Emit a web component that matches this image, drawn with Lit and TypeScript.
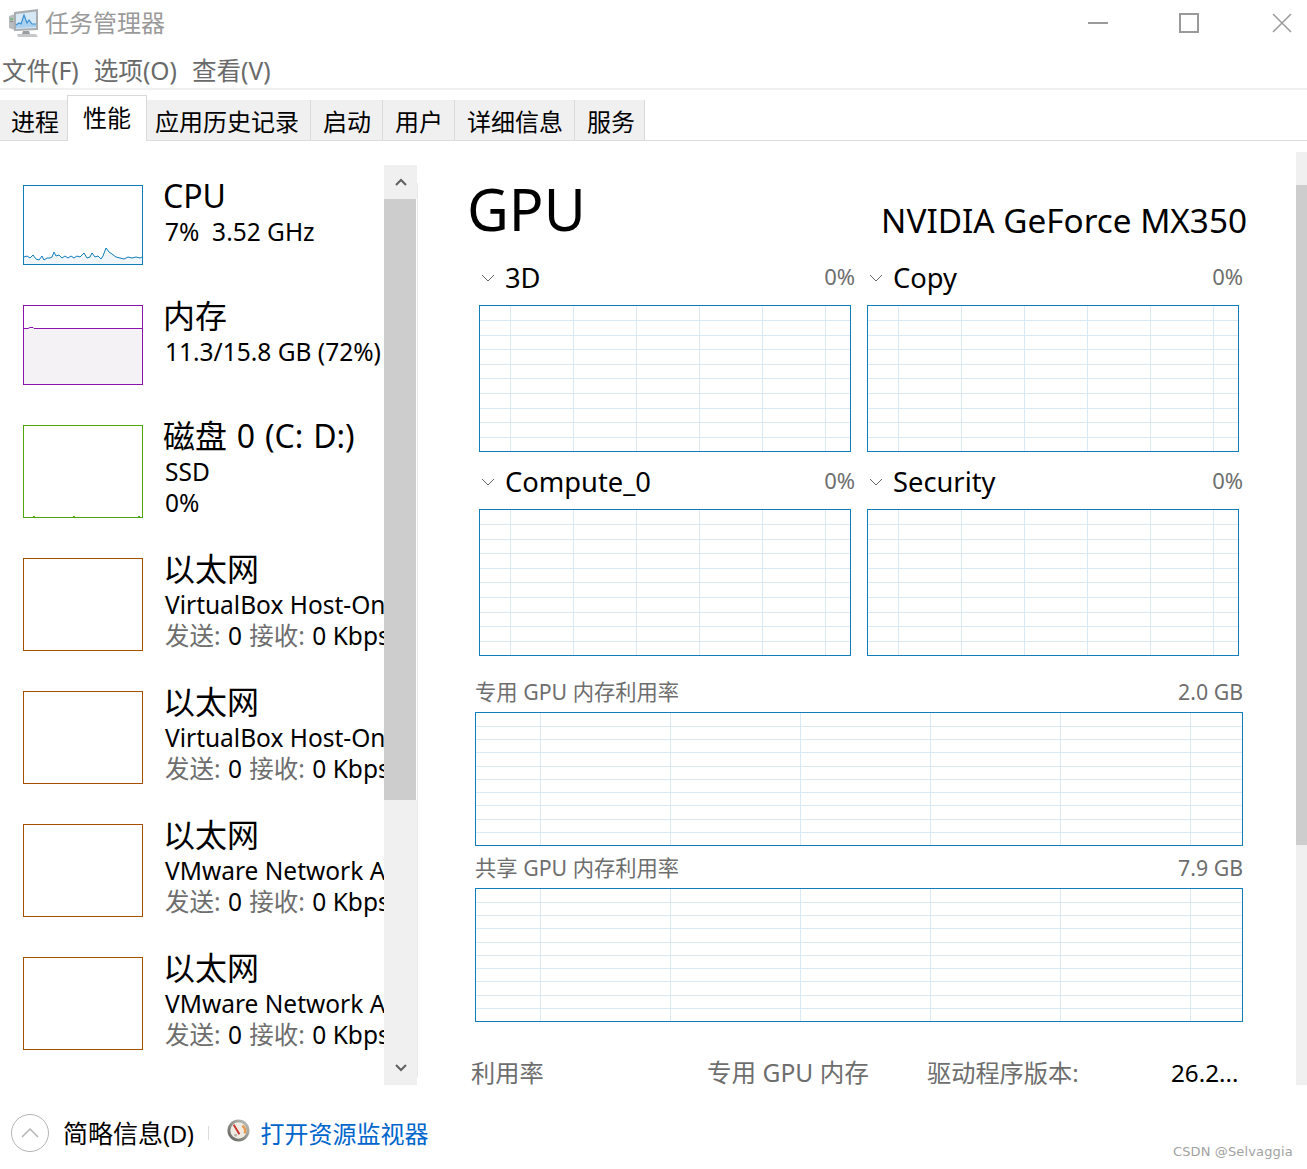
import { LitElement, html, css, svg } from "lit";
import { customElement } from "lit/decorators.js";

function grid(w: number, h: number, xs: number[], ys: number[]) {
  return html`<svg class="grid" width=${w} height=${h} viewBox="0 0 ${w} ${h}" shape-rendering="crispEdges">
    ${xs.map((x) => svg`<line x1=${x + 0.5} x2=${x + 0.5} y1="0" y2=${h} stroke="#dbe9f4"></line>`)}
    ${ys.map((y) => svg`<line x1="0" x2=${w} y1=${y + 0.5} y2=${y + 0.5} stroke="#dbe9f4"></line>`)}
  </svg>`;
}

const cpuLine =
  "0,71 3,70 6,72 9,69 12,73 15,74 18,70 20,74 23,72 26,72 28,71 30,66 32,70 35,69 38,72 41,70 44,72 47,70 50,72 53,70 56,71 60,67 63,72 66,71 68,67 71,71 74,70 77,73 79,70 82,62 85,66 88,68 92,71 96,72 100,73 104,71 108,72 112,71 116,72 118,71";

const sideRows = [
  { l1: "VirtualBox Host-Only Network" },
  { l1: "VirtualBox Host-Only Network #2" },
  { l1: "VMware Network Adapter VMnet1" },
  { l1: "VMware Network Adapter VMnet8" },
];

@customElement("app-root")
export class AppRoot extends LitElement {
  static styles = css`
    :host {
      display: block;
      width: 1307px;
      height: 1169px;
      overflow: hidden;
      background: #fff;
      color: #000;
      font-family: "Noto Sans", "Noto Sans CJK SC", sans-serif;
    }
    .app { display: flex; flex-direction: column; height: 1169px; position: relative; }
    .title { height: 46px; display: flex; align-items: center; flex: none; }
    .app-icon { margin-left: 9px; width: 30px; height: 29px; flex: none; display: block; }
    .title-text { font-size: 24px; color: #9a9a9a; margin-left: 6px; line-height: 46px; flex: 1; }
    .win { display: flex; align-items: center; flex: none; }
    .win svg { display: block; }
    .menu { height: 44px; box-sizing: border-box; display: flex; align-items: center; gap: 15px; padding: 4px 0 0 2px; font-size: 24.6px; color: #6a6a6a; border-bottom: 2px solid #f0f0f0; flex: none; }
    .tabs { height: 51px; display: flex; align-items: flex-end; border-bottom: 1px solid #dcdcdc; flex: none; box-sizing: border-box; }
    .tab { height: 40px; box-sizing: border-box; padding: 0 11px 0 12px; background: #f0f0f0; border-right: 1px solid #d9d9d9; font-size: 24px; line-height: 43px; white-space: nowrap; }
    .tab:first-child { padding-left: 11px; }
    .tab:last-child { padding-right: 9px; }
    .tab.active { height: 46px; background: #fff; border: 1px solid #d9d9d9; border-bottom: none; margin: 0 -4px -1px -4px; padding: 0 15px; line-height: 43px; position: relative; z-index: 1; }
    .body { height: 944px; display: flex; flex: none; overflow: hidden; }
    .side { width: 384px; flex: none; overflow: hidden; padding: 44px 0 0 23px; box-sizing: border-box; display: flex; flex-direction: column; gap: 40px; }
    .row { display: flex; align-items: flex-start; flex: none; }
    .thumb { width: 120px; box-sizing: border-box; border: 1px solid; flex: none; display: block; overflow: hidden; }
    .thumb svg { display: block; }
    .h80 { height: 80px; }
    .h93 { height: 93px; }
    .cpu { border-color: #117dbb; }
    .mem { border-color: #8b12ae; }
    .disk { border-color: #4da60c; }
    .eth { border-color: #a74f00; }
    .rowtext { margin: -8px 0 0 21px; white-space: nowrap; }
    .rt { font-size: 32px; line-height: 38px; height: 39px; margin-left: -1px; word-spacing: 1.5px; }
    .rs { font-size: 24.5px; line-height: 31px; height: 31px; margin-left: 1px; }
    .wide { word-spacing: 1px; }
    .grey { color: #6e6e6e; }
    .sb { width: 33px; flex: none; margin-top: 24px; height: 920px; display: flex; flex-direction: column; background: #f0f0f0; }
    .sb-btn { height: 34px; display: flex; align-items: center; justify-content: center; flex: none; }
    .sb-thumb { height: 601px; background: #cdcdcd; border-right: 1px solid #fff; flex: none; }
    .sb-rest { flex: 1; }
    .sb-line { width: 1px; flex: none; margin-top: 42px; height: 894px; background: #e8e8e8; }
    .main { width: 878px; flex: none; padding: 0 0 0 57px; box-sizing: border-box; overflow: hidden; }
    .inner { width: 768px; }
    .head { display: flex; justify-content: space-between; align-items: flex-start; height: 122px; margin: 0 -4px 0 -8px; }
    .gpu { font-size: 57.5px; line-height: 70px; margin-top: 33px; }
    .model { font-size: 33.3px; line-height: 44px; margin-top: 57px; white-space: nowrap; }
    .cells { display: grid; grid-template-columns: 380px 380px; column-gap: 8px; row-gap: 15px; }
    .cell-head { height: 42px; display: flex; align-items: center; padding-bottom: 13px; box-sizing: border-box; }
    .chev { margin: 0 10px 0 6px; flex: none; display: block; }
    .cell-name { font-size: 27.3px; flex: 1; line-height: 36px; }
    .pct { font-size: 22px; color: #6e6e6e; line-height: 30px; margin-bottom: 4px; }
    .chart { border: 1px solid #117dbb; box-sizing: border-box; display: block; background: #fff; }
    .grid { display: block; }
    .small { width: 372px; height: 147px; margin-left: 4px; }
    .mem-chart { width: 768px; height: 134px; }
    .mem-wrap { padding-top: 14px; }
    .mem-label { height: 42px; box-sizing: border-box; padding-top: 2px; display: flex; align-items: center; justify-content: space-between; font-size: 21.3px; color: #6e6e6e; line-height: 32px; white-space: nowrap; }
    .stats { display: flex; margin: 31px 0 0 -4px; font-size: 24.2px; line-height: 40px; color: #6e6e6e; white-space: nowrap; }
    .s1 { width: 236px; }
    .s2 { width: 220px; font-size: 24.6px; }
    .s3 { width: 244px; }
    .s4 { color: #000; }
    .msb { width: 11px; flex: none; margin-top: 11px; background: #f0f0f0; display: flex; flex-direction: column; }
    .msb-top { height: 33px; flex: none; }
    .msb-thumb { height: 660px; background: #cdcdcd; flex: none; }
    .foot { flex: 1; display: flex; align-items: center; padding: 12px 0 0 11px; box-sizing: border-box; height: 84px; }
    .circle { width: 38px; height: 38px; flex: none; display: block; }
    .brief { font-size: 25px; line-height: 38px; margin: 1px 0 0 14px; white-space: nowrap; }
    .brief span { font-size: 24px; letter-spacing: -0.5px; }
    .vr { width: 1px; height: 14px; background: #dcdcdc; margin: 0 18px 0 15px; flex: none; }
    .gauge { width: 23px; height: 23px; flex: none; display: block; margin-top: -5px; }
    .link { font-size: 24px; line-height: 38px; color: #0066cc; margin: 1px 0 0 10px; white-space: nowrap; }
    .mark { position: absolute; left: 1173px; top: 1143px; font-family: "DejaVu Sans", sans-serif; font-size: 13px; letter-spacing: 0.13px; line-height: 18px; color: #a2a2a2; white-space: nowrap; }
  `;

  private smallChart() {
    return html`<div class="chart small">
      ${grid(370, 145, [30, 93, 156, 219, 282, 345], [14, 29, 43, 58, 72, 87, 102, 116, 131])}
    </div>`;
  }

  private memChart() {
    return html`<div class="chart mem-chart">
      ${grid(766, 132, [64, 194, 324, 454, 584, 714], [13, 26, 39, 53, 66, 79, 92, 106, 119])}
    </div>`;
  }

  private cell(name: string) {
    return html`<div>
      <div class="cell-head">
        <svg class="chev" width="14" height="8" viewBox="0 0 14 8"><path d="M1 1l6 6 6-6" fill="none" stroke="#666" stroke-width="1"></path></svg>
        <div class="cell-name">${name}</div>
        <div class="pct">0%</div>
      </div>
      ${this.smallChart()}
    </div>`;
  }

  render() {
    return html`<div class="app">
      <div class="title">
        <svg class="app-icon" viewBox="0 0 30 29">
          <path d="M0 7l6-2v16l-6-2z" fill="#b9bcbe"></path>
          <rect x="1" y="9" width="3" height="2" fill="#7fb77f"></rect>
          <rect x="1" y="12" width="3" height="1" fill="#8a8a8a"></rect>
          <path d="M5 3l24-3v21l-24 1z" fill="#a9adb0"></path>
          <path d="M7 5l20-2.500v16.500l-20 1z" fill="#d6e8f5"></path>
          <path d="M7 16l3-2 2 1 3-9 3 8 2-3 3 4 3 0 1 0v3l-20 1z" fill="#a9d0ee"></path>
          <path d="M7 16l3-2 2 1 3-9 3 8 2-3 3 4 4 0" fill="none" stroke="#3b8fd0" stroke-width="1.2"></path>
          <path d="M14 22h6l1 3h-8z" fill="#9a9ea1"></path>
          <path d="M8 25h19l2 3H9z" fill="#c6c8ca"></path>
        </svg>
        <div class="title-text">任务管理器</div>
        <div class="win">
          <svg width="247" height="46" viewBox="0 0 247 46">
            <path d="M28 23h20" stroke="#9a9a9a" stroke-width="2"></path>
            <rect x="120" y="14" width="18" height="18" fill="none" stroke="#9a9a9a" stroke-width="2"></rect>
            <path d="M213 14l18 18M231 14l-18 18" stroke="#9a9a9a" stroke-width="1.5"></path>
          </svg>
        </div>
      </div>
      <div class="menu"><span>文件(F)</span><span>选项(O)</span><span>查看(V)</span></div>
      <div class="tabs">
        <div class="tab">进程</div>
        <div class="tab active">性能</div>
        <div class="tab">应用历史记录</div>
        <div class="tab">启动</div>
        <div class="tab">用户</div>
        <div class="tab">详细信息</div>
        <div class="tab">服务</div>
      </div>
      <div class="body">
        <div class="side">
          <div class="row">
            <div class="thumb h80 cpu">
              <svg width="118" height="78" viewBox="0 0 118 78">
                <polygon points="${cpuLine} 118,78 0,78" fill="#f1f6fa"></polygon>
                <polyline points=${cpuLine} fill="none" stroke="#117dbb" stroke-width="1"></polyline>
              </svg>
            </div>
            <div class="rowtext"><div class="rt">CPU</div><div class="rs">7%&nbsp;&nbsp;3.52 GHz</div></div>
          </div>
          <div class="row">
            <div class="thumb h80 mem">
              <svg width="118" height="78" viewBox="0 0 118 78">
                <rect x="0" y="23" width="118" height="55" fill="#f4f2f4"></rect>
                <path d="M0 22.500h4l2-1h3l1 1h108" fill="none" stroke="#8b12ae" stroke-width="1"></path>
              </svg>
            </div>
            <div class="rowtext"><div class="rt">内存</div><div class="rs">11.3/15.8 GB (72%)</div></div>
          </div>
          <div class="row">
            <div class="thumb h93 disk">
              <svg width="118" height="91" viewBox="0 0 118 91">
                <path d="M9 90.500h2M49 90.500h2M114 90.500h2" stroke="#4da60c" stroke-width="1"></path>
              </svg>
            </div>
            <div class="rowtext"><div class="rt">磁盘 0 (C: D:)</div><div class="rs">SSD</div><div class="rs">0%</div></div>
          </div>
          ${sideRows.map(
            (r) => html`<div class="row">
              <div class="thumb h93 eth"></div>
              <div class="rowtext">
                <div class="rt">以太网</div>
                <div class="rs">${r.l1}</div>
                <div class="rs"><span class="wide"><span class="grey">发送:</span> 0 <span class="grey">接收:</span> 0</span> Kbps</div>
              </div>
            </div>`
          )}
        </div>
        <div class="sb">
          <div class="sb-btn">
            <svg width="12" height="8" viewBox="0 0 12 8"><path d="M1 7l5-5 5 5" fill="none" stroke="#606060" stroke-width="2"></path></svg>
          </div>
          <div class="sb-thumb"></div>
          <div class="sb-rest"></div>
          <div class="sb-btn">
            <svg width="12" height="8" viewBox="0 0 12 8"><path d="M1 1l5 5 5-5" fill="none" stroke="#606060" stroke-width="2"></path></svg>
          </div>
        </div>
        <div class="sb-line"></div>
        <div class="main">
          <div class="inner">
            <div class="head"><div class="gpu">GPU</div><div class="model">NVIDIA GeForce MX350</div></div>
            <div class="cells">
              ${this.cell("3D")}${this.cell("Copy")}${this.cell("Compute_0")}${this.cell("Security")}
            </div>
            <div class="mem-wrap">
              <div class="mem-label"><span>专用 GPU 内存利用率</span><span>2.0 GB</span></div>
              ${this.memChart()}
              <div class="mem-label"><span>共享 GPU 内存利用率</span><span>7.9 GB</span></div>
              ${this.memChart()}
            </div>
            <div class="stats">
              <div class="s1">利用率</div><div class="s2">专用 GPU 内存</div><div class="s3">驱动程序版本:</div><div class="s4">26.2...</div>
            </div>
          </div>
        </div>
        <div class="msb"><div class="msb-top"></div><div class="msb-thumb"></div></div>
      </div>
      <div class="foot">
        <svg class="circle" viewBox="0 0 38 38">
          <circle cx="19" cy="19" r="18.500" fill="#fff" stroke="#b4b4b4"></circle>
          <path d="M11 23l8-8 8 8" fill="none" stroke="#b4b4b4" stroke-width="1.500"></path>
        </svg>
        <div class="brief">简略信息<span>(D)</span></div>
        <div class="vr"></div>
        <svg class="gauge" viewBox="0 0 24 24">
          <defs>
            <linearGradient id="ring" x1="1" y1="0" x2="0" y2="1">
              <stop offset="0" stop-color="#c8c8c2"></stop>
              <stop offset="1" stop-color="#5c5c58"></stop>
            </linearGradient>
          </defs>
          <circle cx="12" cy="12" r="11.500" fill="url(#ring)"></circle>
          <circle cx="12" cy="12" r="8.500" fill="#efeae2"></circle>
          <path d="M16 7a7 7 0 0 1 2.500 8" fill="none" stroke="#e59a4f" stroke-width="2.500"></path>
          <path d="M7 6l6 10" stroke="#c8322b" stroke-width="2"></path>
          <circle cx="9" cy="17" r="1.500" fill="#b9b5ac"></circle>
        </svg>
        <div class="link">打开资源监视器</div>
      </div>
      <div class="mark">CSDN @Selvaggia</div>
    </div>`;
  }
}
